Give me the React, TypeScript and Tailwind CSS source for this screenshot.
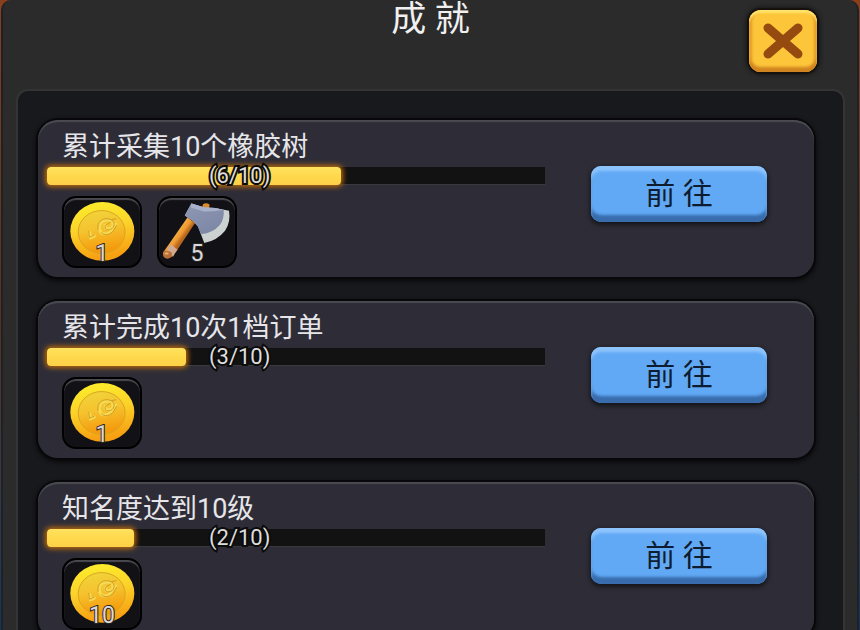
type RewardKind = 'coin' | 'axe';

interface Achievement {
  id: string;
  title: string;
  current: number;
  target: number;
  fill: number; // larghezza della barra in %
  rewards: { kind: RewardKind; amount: number }[];
}

const ACHIEVEMENTS: Achievement[] = [
  {
    id: 'rubber',
    title: '累计采集10个橡胶树',
    current: 6,
    target: 10,
    fill: 59,
    rewards: [
      { kind: 'coin', amount: 1 },
      { kind: 'axe', amount: 5 },
    ],
  },
  {
    id: 'orders',
    title: '累计完成10次1档订单',
    current: 3,
    target: 10,
    fill: 28,
    rewards: [{ kind: 'coin', amount: 1 }],
  },
  {
    id: 'fame',
    title: '知名度达到10级',
    current: 2,
    target: 10,
    fill: 17.5,
    rewards: [{ kind: 'coin', amount: 10 }],
  },
];

function CoinIcon() {
  return (
    <svg viewBox="41 39 230 206" className="w-full h-full" aria-hidden="true">
      <defs>
        <linearGradient id="coin-rim" x1="0" y1="0" x2="0.2" y2="1">
          <stop offset="0" stopColor="#fdf02c" />
          <stop offset="0.5" stopColor="#fbd32a" />
          <stop offset="1" stopColor="#f7a012" />
        </linearGradient>
        <linearGradient id="coin-face" x1="0" y1="0" x2="0.2" y2="1">
          <stop offset="0" stopColor="#f0d63c" />
          <stop offset="0.5" stopColor="#f5c22e" />
          <stop offset="1" stopColor="#f59a0c" />
        </linearGradient>
      </defs>
      <ellipse cx="157" cy="140" rx="97" ry="89" fill="url(#coin-rim)" />
      <ellipse cx="155" cy="142" rx="71" ry="65" fill="url(#coin-face)" stroke="#d9a520" strokeWidth="3" />
      <g fill="none" strokeLinecap="round" strokeLinejoin="round">
        <path
          d="M119 144l2 16 12-6M148 134c-4-18 10-30 26-28 16 2 20 16 10 24-10 6-20 2-18-8M150 136c4 16 28 16 38-4l10-14"
          stroke="#f6da52"
          strokeWidth="9"
        />
        <path
          d="M116 140l2 18 14-6M144 134c-4-22 12-34 30-32 20 2 24 20 12 30-12 8-24 2-20-10l16-10M154 144c8 10 28 8 38-8l8-14M186 104l12-2"
          stroke="#cf9a20"
          strokeWidth="3"
        />
      </g>
    </svg>
  );
}

function AxeIcon() {
  return (
    <svg viewBox="325 39 230 206" className="w-full h-full" aria-hidden="true">
      <defs>
        <linearGradient id="axe-handle" gradientUnits="userSpaceOnUse" x1="376" y1="138" x2="400" y2="156">
          <stop offset="0" stopColor="#f8b048" />
          <stop offset="0.6" stopColor="#ee9a32" />
          <stop offset="1" stopColor="#b8661c" />
        </linearGradient>
        <linearGradient id="axe-head" x1="0" y1="0" x2="0.6" y2="1">
          <stop offset="0" stopColor="#8f98b4" />
          <stop offset="1" stopColor="#7d88a6" />
        </linearGradient>
      </defs>
      <path d="M458 58q10-6 20 1l-2 18h-22z" fill="#dc8a2e" />
      <path d="M411 98l23 17-62 94q-8 12-22 12-16-2-12-18z" fill="url(#axe-handle)" />
      <path d="M357 180l10 4 14 12-8 10-6 12-8-12-10 2 2-14z" fill="#d2aa92" />
      <path d="M338 202q10-8 26 2l-2 14q-12 10-23 0z" fill="#b96f38" />
      <ellipse cx="348" cy="207" rx="6" ry="4" fill="#e9a868" />
      <path d="M423 56l40 12 32 1 42 9q6 34-12 60-24 30-63 37l-19-50-16-17-24-16z" fill="#ccd2d0" />
      <path d="M423 56l40 12 32 1 26 6q2 28-12 46-20 24-57 28l-9-24-16-17-24-16z" fill="url(#axe-head)" />
      <path d="M423 56l40 12 32 1 26 6-32 4-28 1-40-12z" fill="#a9b1ca" />
    </svg>
  );
}

function RewardTile({ kind, amount }: { kind: RewardKind; amount: number }) {
  return (
    <li className="grid w-20 h-[72px] rounded-[14px] bg-[#111116] border-2 border-black shadow-[inset_0_2px_1px_#4a4a50] overflow-hidden">
      <div className="col-start-1 row-start-1 w-full h-[68px]">
        {kind === 'coin' ? <CoinIcon /> : <AxeIcon />}
      </div>
      <span className="col-start-1 row-start-1 self-end justify-self-center text-[23px] leading-6 text-[#d8d8dc] [-webkit-text-stroke:2px_#2a2420] [paint-order:stroke_fill]">
        {amount}
      </span>
    </li>
  );
}

function ProgressBar({ item }: { item: Achievement }) {
  return (
    <div
      role="progressbar"
      aria-label={item.title}
      aria-valuenow={item.current}
      aria-valuemin={0}
      aria-valuemax={item.target}
      className="relative h-[18px] bg-[#121212] border-b border-[#3a3a3e]"
    >
      <div
        className="h-[18px] rounded-[4px] bg-linear-to-b from-[#ffe25f] via-[#ffd94c] to-[#fdd048] shadow-[0_0_5px_2px_#b8690e]"
        style={{ width: `${item.fill}%` }}
      />
      <span className="absolute left-[162px] top-0 text-[22px] leading-[18px] text-[#dedede] [-webkit-text-stroke:4px_#0c0c0c] [paint-order:stroke_fill]">
        ({item.current}/{item.target})
      </span>
    </div>
  );
}

function AchievementCard({ item }: { item: Achievement }) {
  return (
    <li className="flex items-start gap-[46px] shrink-0 rounded-[20px] bg-[#2e2d37] pt-3 pb-[9px] pl-[9px] pr-[47px] shadow-[inset_0_2px_1px_#4b4b52,0_0_0_2px_#08080a,0_2px_4px_2px_#08080a]">
      <div className="flex-1 min-w-0">
        <h2 className="pl-[15px] text-[27px] leading-[30px] text-[#e6e6ea]">{item.title}</h2>
        <div className="pt-[5px]">
          <ProgressBar item={item} />
        </div>
        <ul className="flex gap-[15px] pl-[15px] pt-[11px]">
          {item.rewards.map(r => (
            <RewardTile key={r.kind} kind={r.kind} amount={r.amount} />
          ))}
        </ul>
      </div>
      <button
        type="button"
        className="mt-[34px] w-44 h-14 rounded-[10px] bg-[#61a9f5] text-[30px] leading-9 text-[#0e1c30] shadow-[inset_0_5px_3px_#8ec4fc,inset_0_-7px_3px_#386cad,0_2px_4px_1px_#15151b]"
      >
        前 往
      </button>
    </li>
  );
}

export default function App() {
  return (
    <div className="h-screen overflow-hidden px-px bg-linear-to-b from-[#8a3f1c] via-[#5a3018] to-[#12365c] font-[Roboto,'Noto_Sans_CJK_SC',sans-serif]">
      <main className="flex flex-col h-full rounded-t-[10px] bg-[#2b2b2b] border-x-2 border-[#1c2228] pl-[13px] pr-3">
        <header className="grid grid-cols-[1fr_auto_1fr] items-start shrink-0 h-[89px]">
          <h1 className="col-start-2 text-[35px] leading-[39px] text-[#f0f0f0]">成 就</h1>
          <button
            type="button"
            aria-label="关闭"
            className="justify-self-end mt-2.5 mr-7 grid place-items-center w-[68px] h-[62px] rounded-xl bg-[#fdc63a] shadow-[inset_0_3px_2px_#ffe36c,inset_0_-5px_3px_#d08420,inset_3px_0_3px_#e59c28,inset_-3px_0_3px_#e59c28,0_0_0_2px_#15120e,0_0_4px_3px_#17171a]"
          >
            <svg viewBox="0 0 40 36" className="w-10 h-9" aria-hidden="true">
              <path d="M5 5l30 26M35 5L5 31" stroke="#954a10" strokeWidth="9" strokeLinecap="round" />
            </svg>
          </button>
        </header>

        {/* Elenco obiettivi */}
        <ul className="flex flex-col gap-6 flex-1 min-h-0 overflow-hidden rounded-t-xl bg-[#18191d] border-2 border-b-0 border-[#343434] pl-5 pr-[29px] pt-[29px]">
          {ACHIEVEMENTS.map(item => (
            <AchievementCard key={item.id} item={item} />
          ))}
        </ul>
      </main>
    </div>
  );
}
